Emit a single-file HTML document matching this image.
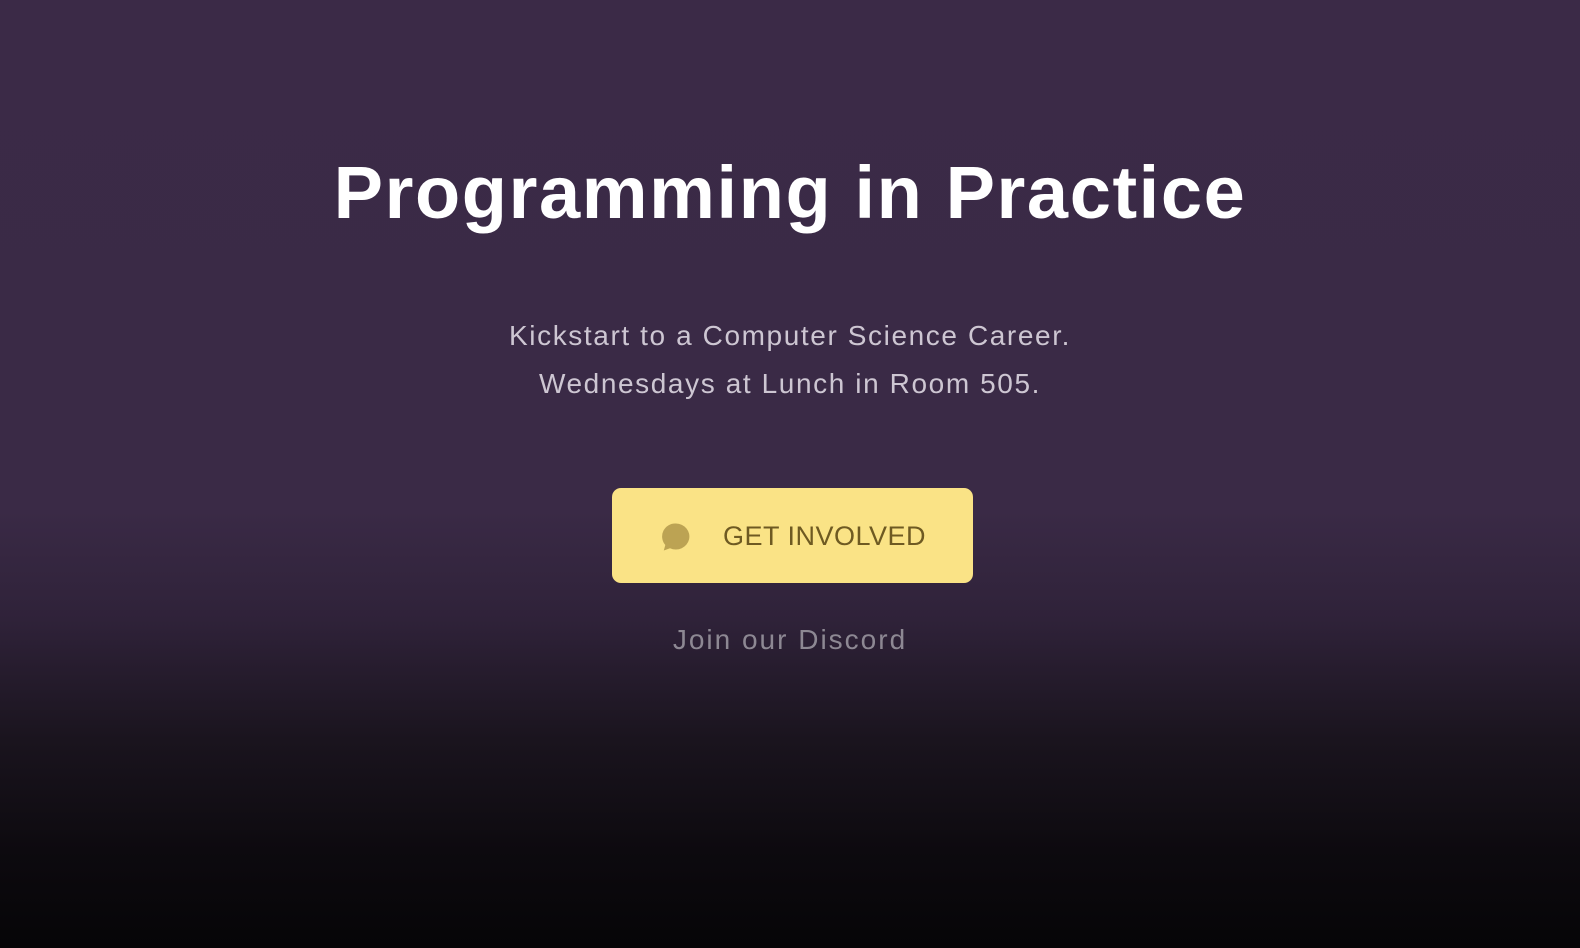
<!DOCTYPE html>
<html><head><meta charset="utf-8"><style>
html,body{margin:0;padding:0}
body{width:1580px;height:948px;overflow:hidden;position:relative;font-family:"Liberation Sans",sans-serif;
background:linear-gradient(to bottom,#3b2a47 0px,#3a2a46 510px,#2f2239 620px,#1a141e 740px,#0d0a0f 850px,#060507 948px);}
.t{position:absolute;left:0;width:1580px;text-align:center;top:143px;font-size:74px;font-weight:bold;color:#fff;letter-spacing:1.6px;line-height:100px}
.s{position:absolute;left:0;width:1580px;text-align:center;top:312px;font-size:28px;line-height:48px;color:#cdc6d2;letter-spacing:1.6px}
.b{position:absolute;left:612px;top:488px;width:361px;height:95px;border-radius:9px;background:#fae386}
.bt{position:absolute;left:723px;top:518px;font-size:27px;line-height:36px;color:#6e5a22;letter-spacing:0.5px}
.d{position:absolute;left:0;width:1580px;text-align:center;top:622px;font-size:28px;line-height:36px;color:#8d8893;letter-spacing:2px}
</style></head><body>
<div class="t">Programming in Practice</div>
<div class="s">Kickstart to a Computer Science Career.<br>Wednesdays at Lunch in Room 505.</div>
<div class="b"></div>
<svg style="position:absolute;left:661px;top:522px" width="30" height="30" viewBox="0 0 30 30"><path d="M15 1.5a13.5 13 0 1 1 -6 24.7l-6.2 2.3 1.5-5.5A13 13 0 0 1 15 1.5z" fill="#bca353"/></svg>
<div class="bt">GET INVOLVED</div>
<div class="d">Join our Discord</div>
</body></html>
